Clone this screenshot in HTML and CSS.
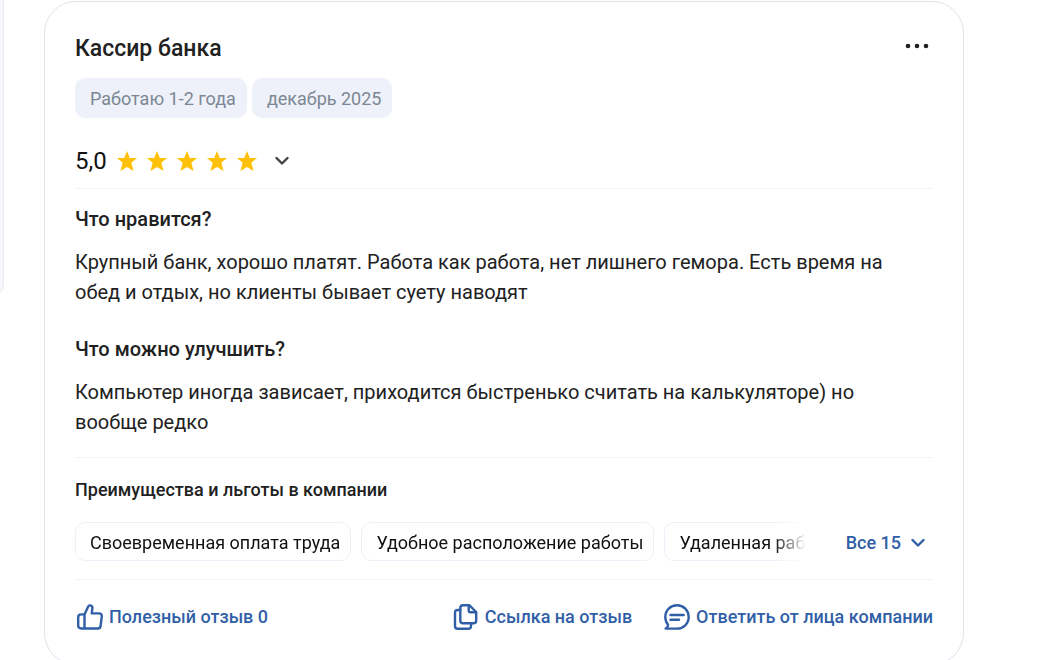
FILE: index.html
```html
<!DOCTYPE html>
<html lang="ru">
<head>
  <meta charset="UTF-8">
  <title>Кассир банка – отзыв о работе</title>
  <meta name="viewport" content="width=device-width, initial-scale=1.0">
  <link rel="stylesheet" href="styles.css">
</head>
<body>
  <div class="page">
    <aside class="sidebar"></aside>
    <main class="review">
      <header class="review-header">
        <h1>Кассир банка</h1>
        <button class="menu-btn" type="button" aria-label="Ещё">
          <svg width="24" height="6" viewBox="0 0 24 6" fill="currentColor">
            <circle cx="3" cy="3" r="2.3"/><circle cx="12" cy="3" r="2.3"/><circle cx="21" cy="3" r="2.3"/>
          </svg>
        </button>
      </header>

      <div class="tags">
        <span class="tag">Работаю 1-2 года</span>
        <span class="tag">декабрь 2025</span>
      </div>

      <div class="rating">
        <span class="score">5,0</span>
        <svg class="star" viewBox="0 0 20 20"><path d="M10 0l2.8 7H20l-5.6 4.8L16.5 20 10 15.9 3.5 20l2.1-8.2L0 7h7.2z"/></svg>
        <svg class="star" viewBox="0 0 20 20"><path d="M10 0l2.8 7H20l-5.6 4.8L16.5 20 10 15.9 3.5 20l2.1-8.2L0 7h7.2z"/></svg>
        <svg class="star" viewBox="0 0 20 20"><path d="M10 0l2.8 7H20l-5.6 4.8L16.5 20 10 15.9 3.5 20l2.1-8.2L0 7h7.2z"/></svg>
        <svg class="star" viewBox="0 0 20 20"><path d="M10 0l2.8 7H20l-5.6 4.8L16.5 20 10 15.9 3.5 20l2.1-8.2L0 7h7.2z"/></svg>
        <svg class="star" viewBox="0 0 20 20"><path d="M10 0l2.8 7H20l-5.6 4.8L16.5 20 10 15.9 3.5 20l2.1-8.2L0 7h7.2z"/></svg>
        <button class="rating-toggle" type="button" aria-label="Показать оценки">
          <svg class="chevron" viewBox="0 0 14 10"><path d="M1.5 2L7 7.5 12.5 2"/></svg>
        </button>
      </div>

      <section class="answers">
        <h2>Что нравится?</h2>
        <p>Крупный банк, хорошо платят. Работа как работа, нет лишнего гемора. Есть время на обед и отдых, но клиенты бывает суету наводят</p>
        <h2>Что можно улучшить?</h2>
        <p>Компьютер иногда зависает, приходится быстренько считать на калькуляторе) но вообще редко</p>
      </section>

      <section class="benefits">
        <h3>Преимущества и льготы в компании</h3>
        <div class="benefits-row">
          <ul class="benefits-list">
            <li>Своевременная оплата труда</li>
            <li>Удобное расположение работы</li>
            <li>Удаленная работа</li>
          </ul>
          <button class="link-btn" type="button">
            Все 15
            <svg class="chevron" viewBox="0 0 14 10"><path d="M1.5 2L7 7.5 12.5 2"/></svg>
          </button>
        </div>
      </section>

      <footer class="actions">
        <button class="link-btn" type="button">
          <svg class="icon" viewBox="0 0 26 26">
            <path d="M7.5 24.5V10.5M7.5 10.5L11.2 2.6C11.6 1.6 12.4 1.2 13.3 1.4C14.8 1.7 15.6 2.9 15.4 4.4L14.7 9.4H22.2C24 9.4 25 10.7 24.8 12.4L23.6 22C23.4 23.6 22.4 24.5 20.8 24.5H4.2C2.3 24.5 1.2 23.4 1.2 21.5V13.3C1.2 11.4 2.3 10.4 4.2 10.4H7.5"/>
          </svg>
          Полезный отзыв 0
        </button>
        <button class="link-btn push" type="button">
          <svg class="icon" viewBox="0 0 26 26">
            <path d="M10 1.3H16.5L23.2 8V16.6C23.2 18.4 22.3 19.3 20.5 19.3H10C8.2 19.3 7.3 18.4 7.3 16.6V4C7.3 2.2 8.2 1.3 10 1.3Z"/>
            <path d="M15.7 1.6V6.2C15.7 7.6 16.4 8.3 17.8 8.3H23"/>
            <path d="M7.3 6H4.7C2.9 6 2 6.9 2 8.7V22C2 23.8 2.9 24.7 4.7 24.7H15.3C17.1 24.7 18 23.8 18 22V19.3"/>
          </svg>
          Ссылка на отзыв
        </button>
        <button class="link-btn" type="button">
          <svg class="icon" viewBox="0 0 26 26">
            <path d="M13 24.6H1.6C3.3 23.3 4.3 22.4 4.1 20.8C2.3 18.7 1.3 16.2 1.3 13C1.3 6.4 6.5 1.3 13 1.3S24.7 6.4 24.7 13S19.5 24.6 13 24.6Z"/>
            <path d="M6.5 11H19.7M6.5 15.7H15"/>
          </svg>
          Ответить от лица компании
        </button>
      </footer>
    </main>
  </div>
</body>
</html>
```
FILE: styles.css
```css
* { box-sizing: border-box; }
body { margin: 0; font-family: Roboto, "Open Sans", sans-serif; background: #fff; color: #212121; }
h1, h2, h3, p, ul { margin: 0; padding: 0; }
button { font-family: inherit; background: none; border: 0; padding: 0; cursor: pointer; color: inherit; }
svg { display: block; flex-shrink: 0; }

.page { display: flex; align-items: flex-start; gap: 40px; height: 100vh; padding: 1px 81px 0 0; overflow: hidden; }
.sidebar { width: 4px; height: 293px; background: #f5f6fc; border-right: 1px solid #e9ecf5; border-bottom-right-radius: 12px 24px; margin-top: -1px; }
.review { flex: 1; min-width: 0; padding: 30px 30px 34px; border: 1px solid #dfe3ec; border-radius: 32px; }

.review-header { display: flex; justify-content: space-between; align-items: flex-start; }
h1 { font-size: 23px; line-height: 34px; font-weight: 500; }
.menu-btn { padding: 11px 4px; }

.tags { display: flex; gap: 5px; margin-top: 12px; }
.tag { padding: 2px 11px 0 15px; border-radius: 10px; background: #eef1f9; color: #7b8794; font-size: 18px; line-height: 38px; }

.rating { display: flex; align-items: center; gap: 10px; margin-top: 27px; padding-bottom: 11px; border-bottom: 1px solid #f3f4f8; }
.score { font-size: 24px; line-height: 32px; color: #111; }
.star { width: 20px; height: 20px; fill: #ffc107; }
.rating-toggle { padding: 8px; color: #424242; }
.chevron { width: 14px; height: 10px; fill: none; stroke: currentColor; stroke-width: 2.4; stroke-linecap: round; stroke-linejoin: round; }

.answers { padding: 15px 0 20px; border-bottom: 1px solid #f3f4f8; }
h2 { font-size: 20px; line-height: 30px; font-weight: 500; }
.answers p { margin: 13px 0 27px; padding-right: 40px; font-size: 20px; line-height: 30px; }
.answers p:last-child { margin-bottom: 0; }

.benefits { padding: 20px 0 18px; border-bottom: 1px solid #f3f4f8; }
h3 { font-size: 18px; line-height: 24px; font-weight: 500; }
.benefits-row { display: flex; align-items: center; justify-content: space-between; gap: 40px; margin-top: 20px; padding-right: 8px; }
.benefits-list {
  display: flex; gap: 10px; flex: 1; min-width: 0; overflow: hidden; list-style: none;
  -webkit-mask-image: linear-gradient(to left, transparent, #000 32px);
  mask-image: linear-gradient(to left, transparent, #000 32px);
}
.benefits-list li { flex-shrink: 0; padding: 2px 10px 0 14px; border: 1px solid #eef0f9; border-radius: 10px; font-size: 18px; line-height: 35px; color: #111; }

.link-btn { display: flex; align-items: center; gap: 6px; color: #315fa7; font-size: 18px; line-height: 26px; font-weight: 500; white-space: nowrap; }
.benefits-row .link-btn { gap: 10px; padding-top: 2px; }
.actions { display: flex; gap: 32px; padding: 24px 0 0 2px; }
.push { margin-left: auto; }
.icon { width: 26px; height: 26px; fill: none; stroke: currentColor; stroke-width: 2.4; stroke-linecap: round; stroke-linejoin: round; }
```
